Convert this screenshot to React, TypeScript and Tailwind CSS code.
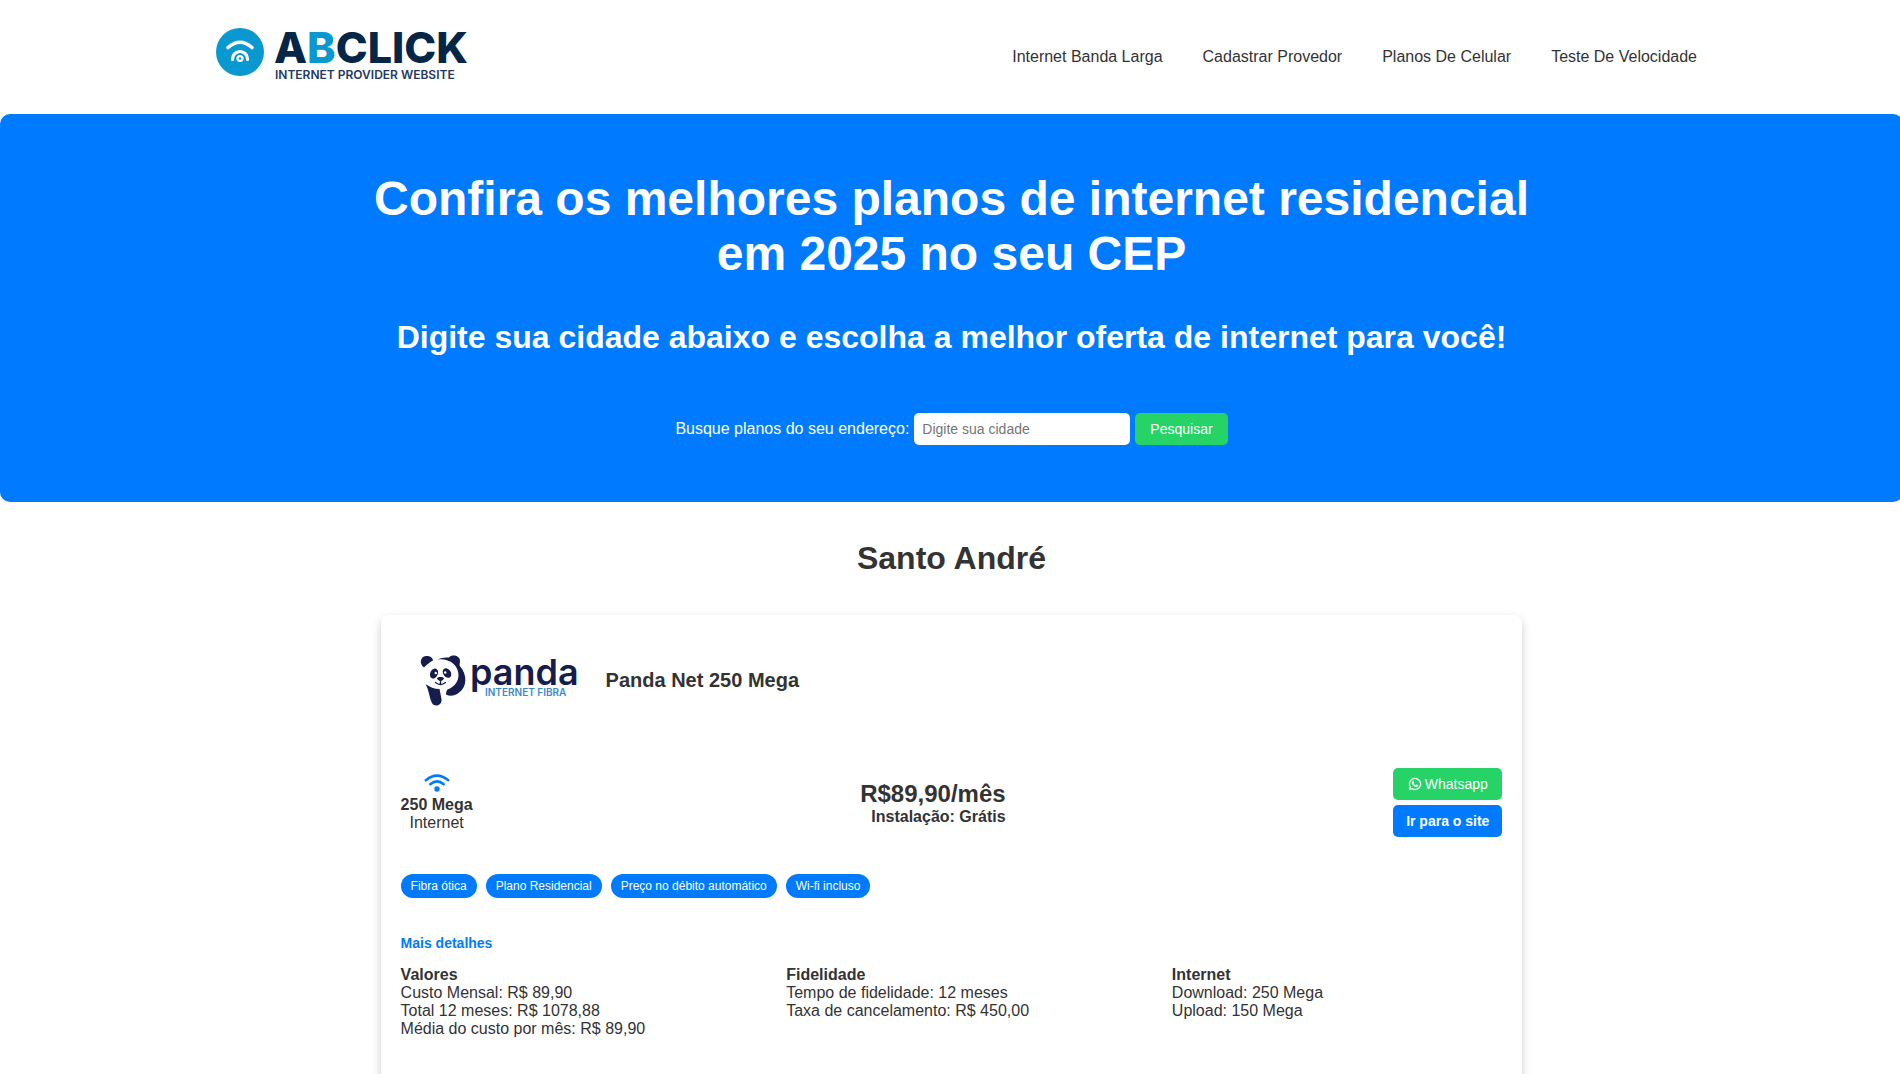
import React from "react";
import { FaWhatsapp } from "react-icons/fa";

const navLinks = ["Internet Banda Larga", "Cadastrar Provedor", "Planos De Celular", "Teste De Velocidade"];

const tags = ["Fibra ótica", "Plano Residencial", "Preço no débito automático", "Wi-fi incluso"];

const details = [
  { title: "Valores", lines: ["Custo Mensal: R$ 89,90", "Total 12 meses: R$ 1078,88", "Média do custo por mês: R$ 89,90"] },
  { title: "Fidelidade", lines: ["Tempo de fidelidade: 12 meses", "Taxa de cancelamento: R$ 450,00"] },
  { title: "Internet", lines: ["Download: 250 Mega", "Upload: 150 Mega"] },
];

function BrandLogo() {
  return (
    <svg width="270" height="70" viewBox="0 0 270 70" role="img" aria-label="ABCLICK Internet Provider Website">
      <circle cx="34" cy="30" r="24" fill="#0a98d0" />
      <g fill="none" stroke="#fff" strokeWidth="3.6" strokeLinecap="round">
        <path d="M22 25.500Q34 15 46 25.500" />
        <path d="M26.500 37.500v-.500a7.500 7.500 0 0 1 15 0v.500" strokeWidth="3.200" />
      </g>
      <circle cx="34" cy="36.500" r="3.600" fill="#fff" />
      <circle cx="34" cy="36.500" r="1.300" fill="#0a98d0" />
      <text x="68" y="41" fontFamily="Inter, sans-serif" fontWeight="800" fontSize="43" fill="#062648">
        A<tspan fill="#0a98d0">B</tspan>CLICK
      </text>
      <text x="69" y="57" fontFamily="Inter, sans-serif" fontWeight="600" fontSize="12" fill="#24395c">
        INTERNET PROVIDER WEBSITE
      </text>
    </svg>
  );
}

function PandaLogo() {
  return (
    <svg
      className="overflow-visible"
      width="160"
      height="54"
      viewBox="0 0 160 54"
      role="img"
      aria-label="Panda Internet Fibra"
    >
      <g fill="#161c4c">
        <path d="M5 14.500C0 11 1 3.500 7 3c4-.500 7 2 7 4.500-3 1.500-6 4-9 7Z" />
        <path d="M18.500 6.500C23 4.500 27 4.500 30 4.500c3-3.500 11-2 11 3.500 0 1.500-.500 3-.500 4.500 8 9 8 21.500-1 27.500-4 3-8.500 3.500-12.500 1.500 0-2 .500-4 1.500-5 7-2.500 11-8 11-14.500C39.500 12 30 5 18.500 6.500Z" />
        <path d="M6.500 31c4 3 9 5 14 5l2 10c1 7-8 9-10 3C10 43 10 37 6.500 31Z" />
        <ellipse cx="15" cy="20.500" rx="3.800" ry="5.200" transform="rotate(25 15 20.500)" />
        <ellipse cx="28" cy="20" rx="3.800" ry="5.200" transform="rotate(-35 28 20)" />
        <path d="M18 25c1-1.500 6-1.500 7 0 0 1.500-2 3-3.500 3S18 26.500 18 25Z" />
      </g>
      <path d="M16.500 29.500q5 4 10 0M21.500 27v4" fill="none" stroke="#161c4c" strokeWidth="1.300" strokeLinecap="round" />
      <circle cx="16.800" cy="20" r="1.200" fill="#fff" />
      <circle cx="26.200" cy="19.500" r="1.200" fill="#fff" />
      <text x="51" y="32" fontFamily="Inter, sans-serif" fontWeight="600" fontSize="36" fill="#161c4c">
        panda
      </text>
      <text x="66" y="43" fontFamily="Inter, sans-serif" fontWeight="600" fontSize="10" fill="#3b8acb">
        INTERNET FIBRA
      </text>
    </svg>
  );
}

function WifiIcon() {
  return (
    <svg width="26" height="18" viewBox="0 0 26 18" aria-hidden="true">
      <g fill="none" stroke="#007bff" strokeWidth="2.500" strokeLinecap="round">
        <path d="M1.800 6.200Q13-3 24.200 6.200" />
        <path d="M6.300 10.300Q13 4.500 19.700 10.300" />
      </g>
      <circle cx="13" cy="15" r="2.700" fill="#007bff" />
    </svg>
  );
}

function Header() {
  return (
    <header className="flex h-[114px] items-center justify-between px-[206px]">
      <a href="#">
        <BrandLogo />
      </a>
      <nav className="flex gap-10">
        {navLinks.map((label) => (
          <a key={label} href="#" className="leading-[18px]">
            {label}
          </a>
        ))}
      </nav>
    </header>
  );
}

function Hero() {
  return (
    <section className="flex flex-col items-center rounded-[10px] bg-[#007bff] py-[57px] text-center text-white">
      <h1 className="max-w-[1200px] text-5xl leading-[55px] font-bold">
        Confira os melhores planos de internet residencial em 2025 no seu CEP
      </h1>
      <h2 className="mt-[38px] text-[32px] leading-[37px] font-bold">
        Digite sua cidade abaixo e escolha a melhor oferta de internet para você!
      </h2>
      <form className="mt-[57px] flex items-center gap-[5px]" onSubmit={(e) => e.preventDefault()}>
        <label htmlFor="cidade" className="leading-[18px]">
          Busque planos do seu endereço:
        </label>
        <input
          id="cidade"
          type="text"
          placeholder="Digite sua cidade"
          className="h-8 w-[216px] rounded-[5px] bg-white px-2 text-sm text-[#333] placeholder:text-[#757575]"
        />
        <button type="submit" className="h-8 rounded-[5px] bg-[#25d366] px-[15px] text-sm">
          Pesquisar
        </button>
      </form>
    </section>
  );
}

function PlanCard() {
  return (
    <article className="mx-auto w-[60%] rounded-lg bg-white p-5 shadow-[0_4px_10px_rgba(0,0,0,0.2)]">
      <div className="flex items-center gap-[27px] pt-[18px] pl-[18px]">
        <PandaLogo />
        <h3 className="text-xl leading-[23px] font-bold">Panda Net 250 Mega</h3>
      </div>

      <div className="mt-[61px] flex items-center justify-between">
        <div className="flex flex-col items-center leading-[18px]">
          <WifiIcon />
          <strong className="mt-1">250 Mega</strong>
          <span>Internet</span>
        </div>
        <div className="text-right font-bold">
          <p className="text-2xl leading-7">R$89,90/mês</p>
          <p className="leading-[18px]">Instalação: Grátis</p>
        </div>
        <div className="flex flex-col gap-[5px] text-sm text-white">
          <button type="button" className="flex h-8 items-center justify-center gap-[3px] rounded-[5px] bg-[#25d366]">
            <FaWhatsapp className="size-[14px] stroke-white stroke-[12]" />
            Whatsapp
          </button>
          <a href="#" className="flex h-8 items-center rounded-[5px] bg-[#007bff] px-[13px] font-bold">
            Ir para o site
          </a>
        </div>
      </div>

      <ul className="mt-[37px] flex gap-[9px] text-xs text-white">
        {tags.map((tag) => (
          <li key={tag} className="flex h-6 items-center rounded-full bg-[#007bff] px-[10px]">
            {tag}
          </li>
        ))}
      </ul>

      <button type="button" className="mt-[37px] block text-sm leading-4 font-bold text-[#007bff]">
        Mais detalhes
      </button>
      <div className="mt-[15px] flex justify-between pb-10">
        {details.map((group) => (
          <section key={group.title} className="w-[30%] leading-[18px]">
            <h4 className="font-bold">{group.title}</h4>
            {group.lines.map((line) => (
              <p key={line}>{line}</p>
            ))}
          </section>
        ))}
      </div>
    </article>
  );
}

export default function App() {
  return (
    <div className="min-h-screen overflow-x-clip bg-white font-['Liberation_Sans',Arial,sans-serif] text-[#333]">
      <div className="-mr-[3px]">
        <Header />
        <Hero />
        <main>
          <h2 className="my-[38px] text-center text-[32px] leading-[37px] font-bold">Santo André</h2>
          <PlanCard />
        </main>
      </div>
    </div>
  );
}
